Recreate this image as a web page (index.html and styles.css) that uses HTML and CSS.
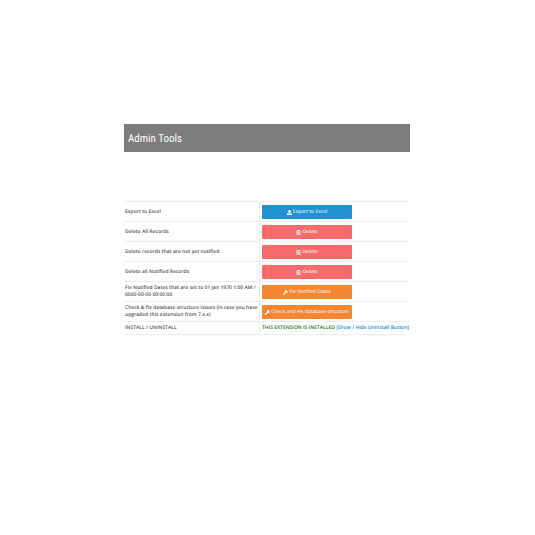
FILE: index.html
```html
<!DOCTYPE html>
<html lang="en">
<head>
    <meta charset="utf-8">
    <title>Admin Tools</title>
    <link rel="stylesheet" href="styles.css">
</head>
<body>

    <!-- shared icons -->
    <svg class="sprite" aria-hidden="true">
        <symbol id="icon-export" viewBox="0 0 16 16">
            <path d="M5 0h6v5h4l-7 6-7-6h4zM0 10h3l4 3h2l4-3h3v6H0z"/>
        </symbol>
        <symbol id="icon-trash" viewBox="0 0 16 16">
            <path fill-rule="evenodd" d="M5 0h6l1 2h3v2h-1v12H2V4H1V2h3zM4 4v10h8V4zM5 6h1v7H5zM7 6h2v7H7zM10 6h1v7h-1z"/>
        </symbol>
        <symbol id="icon-wrench" viewBox="0 0 16 16">
            <path d="M15.500 4a5 5 0 0 1-6.500 5L3.500 15.500a2 2 0 0 1-3-3L6 6.500A5 5 0 0 1 13 .5L11 3v2h2z"/>
        </symbol>
    </svg>

    <header class="page-header">
        <h1>Admin Tools</h1>
    </header>

    <table class="tools">
        <tr>
            <th scope="row">Export to Excel</th>
            <td><button type="button" class="btn btn-blue"><svg class="icon"><use href="#icon-export"/></svg> Export to Excel</button></td>
        </tr>
        <tr>
            <th scope="row">Delete All Records</th>
            <td><button type="button" class="btn btn-red"><svg class="icon"><use href="#icon-trash"/></svg> Delete</button></td>
        </tr>
        <tr>
            <th scope="row">Delete records that are not yet notified</th>
            <td><button type="button" class="btn btn-red"><svg class="icon"><use href="#icon-trash"/></svg> Delete</button></td>
        </tr>
        <tr>
            <th scope="row">Delete all Notified Records</th>
            <td><button type="button" class="btn btn-red"><svg class="icon"><use href="#icon-trash"/></svg> Delete</button></td>
        </tr>
        <tr>
            <th scope="row">Fix Notified Dates that are set to 01 Jan 1970 1:00 AM / 0000-00-00 00:00:00</th>
            <td><button type="button" class="btn btn-orange"><svg class="icon"><use href="#icon-wrench"/></svg> Fix Notified Dates</button></td>
        </tr>
        <tr>
            <th scope="row">Check &amp; fix database structure issues (in case you have upgraded this extension from 7.x.x)</th>
            <td><button type="button" class="btn btn-orange"><svg class="icon"><use href="#icon-wrench"/></svg> Check and Fix database structure</button></td>
        </tr>
        <tr>
            <th scope="row">INSTALL / UNINSTALL</th>
            <td class="status">THIS EXTENSION IS INSTALLED <a href="#">[Show / Hide Uninstall Button]</a></td>
        </tr>
    </table>

</body>
</html>
```
FILE: styles.css
```css
body {
    margin: 0;
    padding: 124px 125px 0 124px;
    background-color: white;
    color: #555;
    font-family: "Open Sans", sans-serif;
    font-size: 5px;
    line-height: 7px;
    text-rendering: geometricPrecision;
}

.sprite {
    display: none;
}

.page-header {
    padding: 8px 4px 6px;
    margin-bottom: 49px;
    background-color: #7d7d7d;
    color: white;
}

.page-header h1 {
    margin: 0;
    font-family: "Roboto Condensed", Roboto, sans-serif;
    font-size: 11px;
    font-weight: normal;
    line-height: 14px;
}

.tools {
    width: 100%;
    border-collapse: collapse;
    border-bottom: 1px solid #eee;
}

.tools th,
.tools td {
    padding: 3px 1px 2px;
    border-top: 1px solid #eee;
    text-align: left;
    vertical-align: middle;
}

.tools th {
    width: 134px;
    border-right: 1px solid #f0f0f0;
    font-weight: 600;
}

.tools td {
    padding-left: 2px;
}

.btn {
    display: flex;
    align-items: center;
    justify-content: center;
    gap: 1px;
    width: 90px;
    height: 14px;
    padding: 0;
    border: 0;
    border-radius: 1px;
    color: white;
    font: inherit;
    text-rendering: inherit;
    cursor: pointer;
}

.btn-blue {background-color: #2191d0;}
.btn-red {background-color: #f66c6c;}
.btn-orange {background-color: #f58634;}

.icon {
    width: 5px;
    height: 5px;
    fill: currentColor;
}

.tools .status {
    color: #137313;
    font-weight: 600;
    white-space: nowrap;
}

.status a {
    color: #2187c9;
    text-decoration: none;
}
```
